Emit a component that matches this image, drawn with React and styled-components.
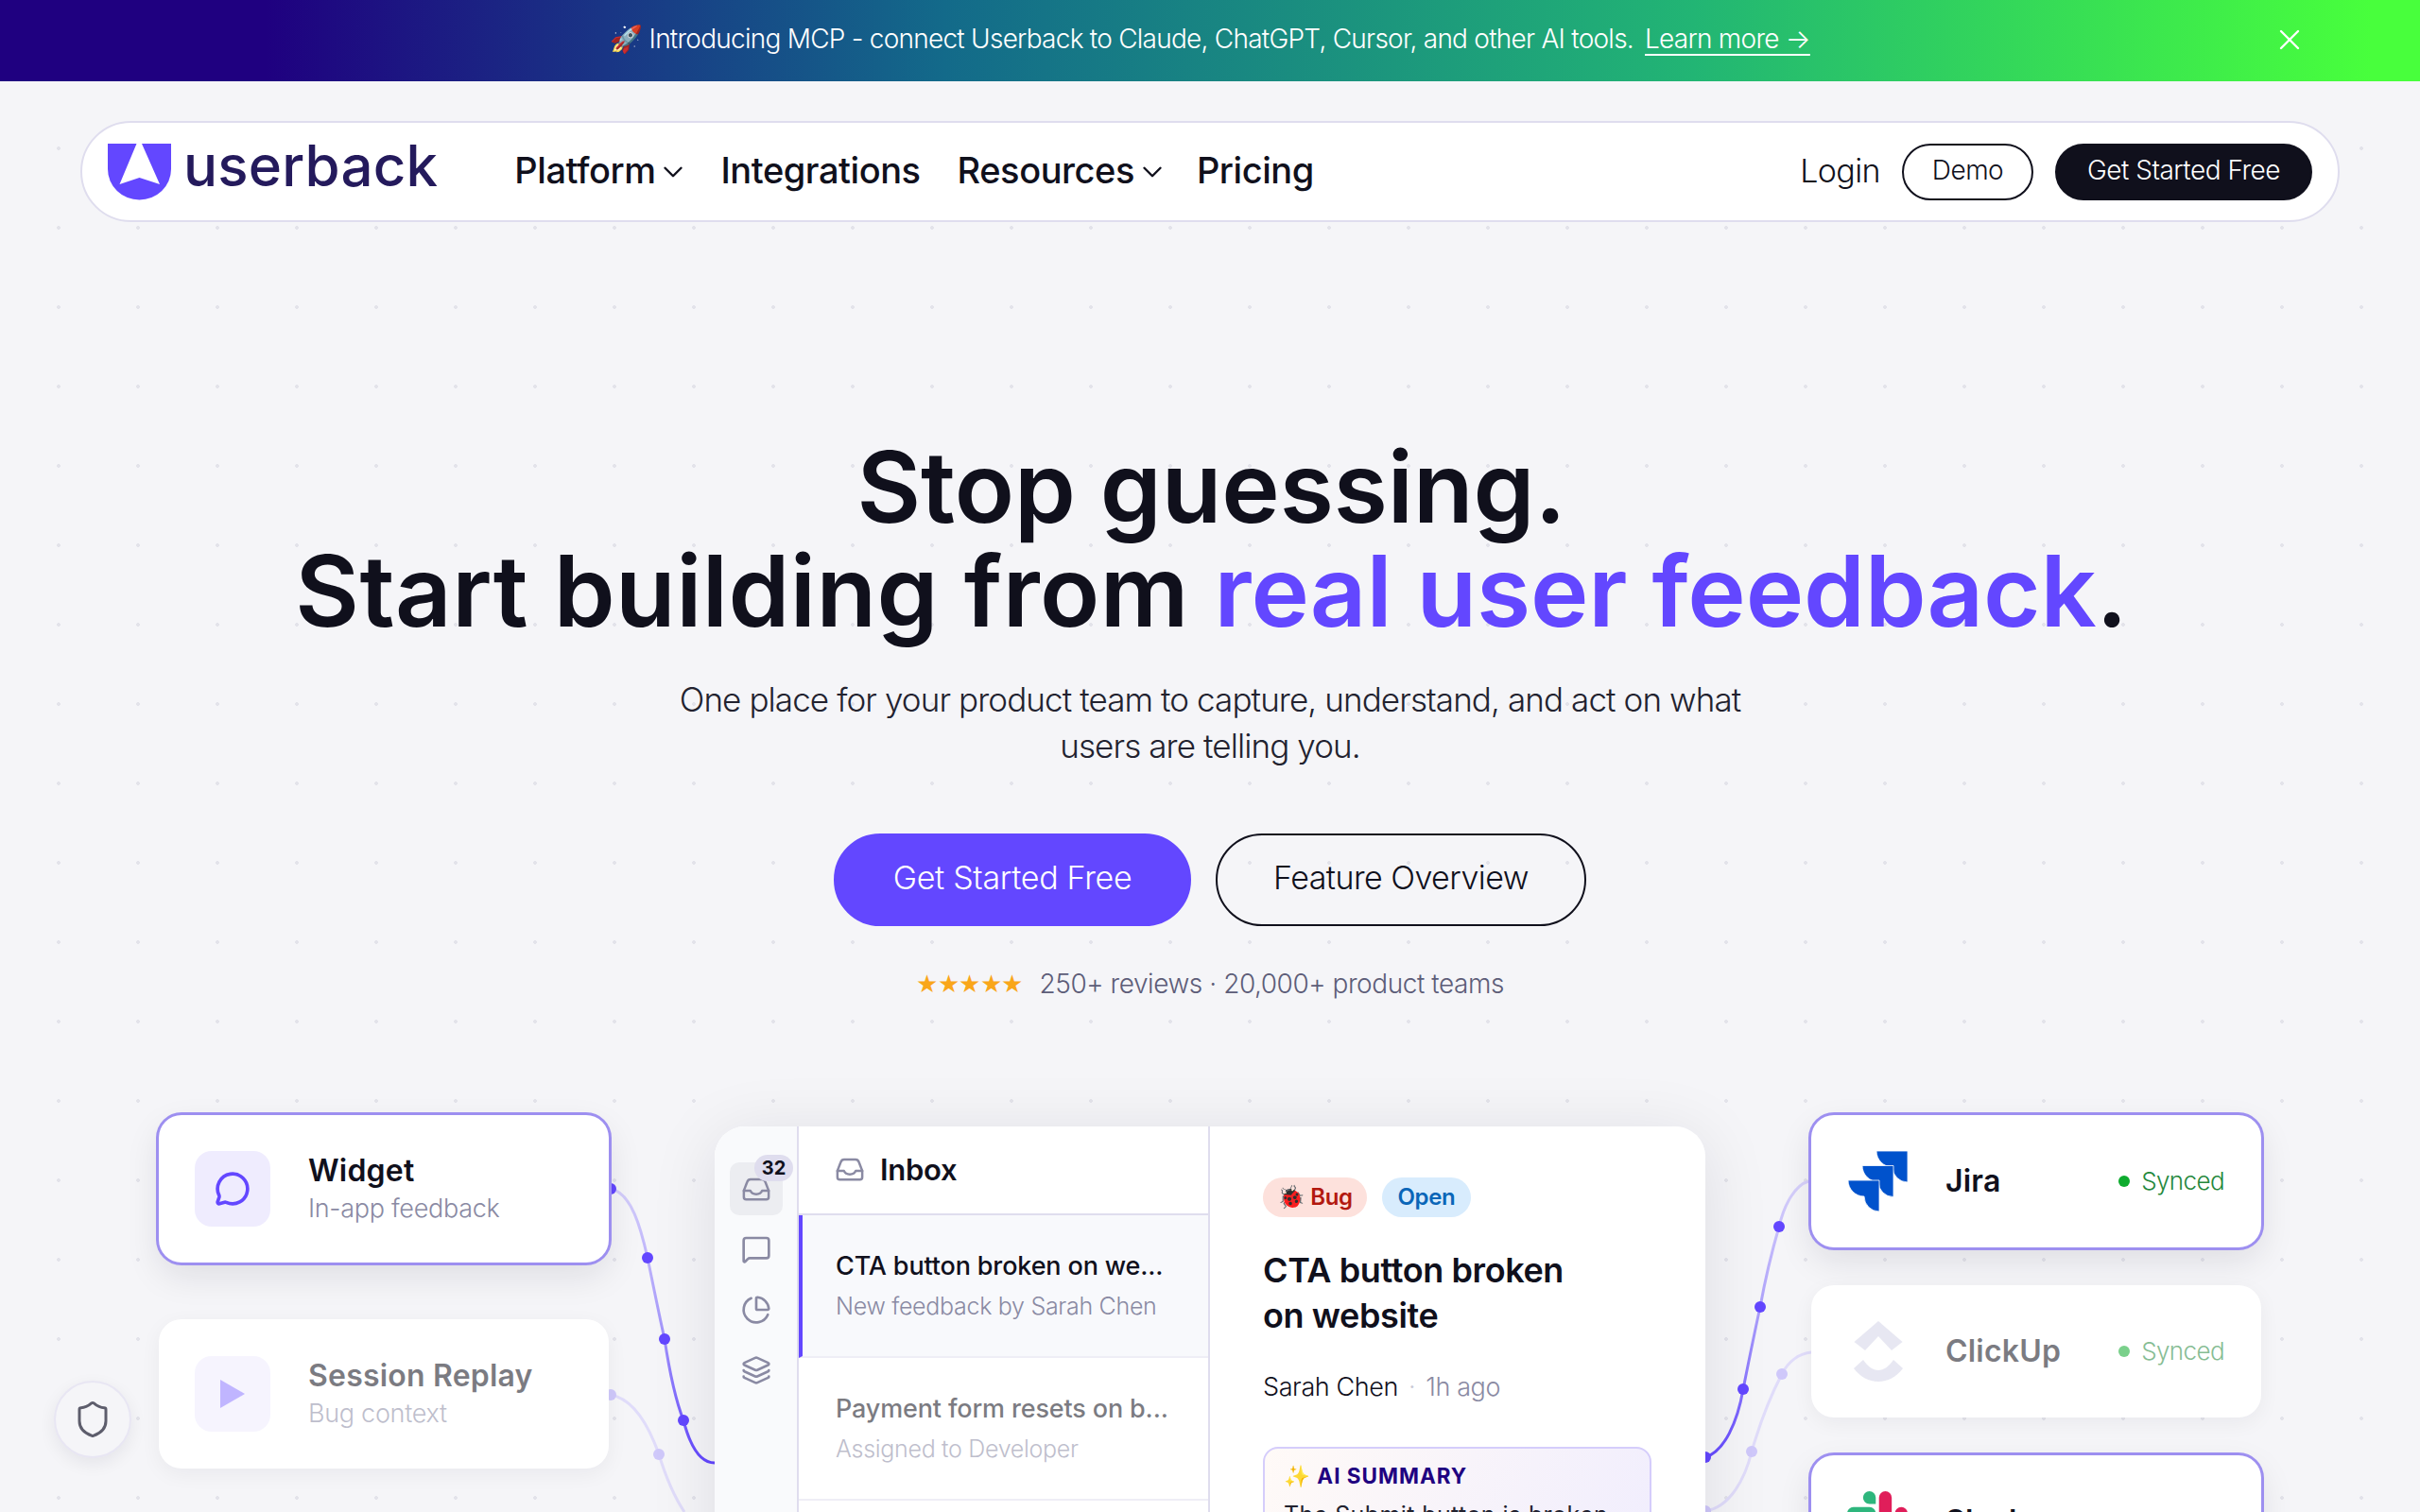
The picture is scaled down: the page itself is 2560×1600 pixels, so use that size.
import React from 'react';
import styled, { createGlobalStyle } from 'styled-components';
import { ChevronDown, X, Shield, MessageCircle, MessageSquare, ChartPie, Layers } from 'lucide-react';

const Global = createGlobalStyle`
  html, body { margin: 0; padding: 0; height: 1600px; overflow: hidden; }
  body { font-family: Inter, "Noto Sans", sans-serif; color: #10101c; background: #f5f5f8; }
  * { box-sizing: border-box; }
  a { color: inherit; }
`;

const Page = styled.div`
  height: 1600px;
  overflow: hidden;
  background-color: #f5f5f8;
  background-image: radial-gradient(circle at center, #e3e3ea 0, #e3e3ea 1.6px, transparent 2.2px);
  background-size: 84px 84px;
  background-position: 20px 31px;
`;

const Banner = styled.div`
  position: relative;
  height: 86px;
  padding-bottom: 5px;
  display: flex;
  align-items: center;
  justify-content: center;
  gap: 12px;
  color: #fff;
  font-size: 28px;
  font-weight: 350;
  letter-spacing: -0.75px;
  background: linear-gradient(90deg, #1f0080 11%, #136a8a 39%, #22b574 70%, #48ff3c 98%);
`;
const BannerLink = styled.a`
  text-decoration: underline;
  text-underline-offset: 6px;
  text-decoration-thickness: 2px;
`;
const BannerClose = styled.button`
  position: absolute;
  right: 120px;
  top: 24px;
  width: 36px;
  height: 36px;
  padding: 0;
  border: 0;
  background: none;
  color: #fff;
  display: flex;
`;

const NavWrap = styled.div`
  padding: 42px 85px 0;
`;
const Nav = styled.nav`
  height: 107px;
  display: flex;
  align-items: center;
  padding: 0 27px;
  background: #fff;
  border: 2px solid #dfddee;
  border-radius: 54px;
`;
const Logo = styled.div`
  display: flex;
  align-items: center;
  gap: 13px;
  margin-right: 81px;
`;
const LogoWord = styled.span`
  font-family: Inter, sans-serif;
  font-weight: 500;
  font-size: 60px;
  line-height: 60px;
  padding-bottom: 13px;
  letter-spacing: 0.2px;
  color: #241a5c;
`;
const NavLinks = styled.div`
  display: flex;
  align-items: center;
  gap: 39px;
`;
const NavLink = styled.a`
  display: flex;
  align-items: center;
  gap: 2px;
  padding-bottom: 3px;
  font-size: 38px;
  font-weight: 500;
  letter-spacing: -0.45px;
  color: #10101c;
  svg { margin: 3px -6px 0 0; }
  &:last-child { margin-left: -3px; }
`;
const NavRight = styled.div`
  margin-left: auto;
  display: flex;
  align-items: center;
  gap: 23px;
`;
const Login = styled.a`
  padding-bottom: 3px;
  font-size: 34px;
  font-weight: 350;
  letter-spacing: -0.6px;
`;
const SmallBtn = styled.button`
  height: 60px;
  padding: 0 0 3px;
  width: ${p => p.$w}px;
  border-radius: 30px;
  font: 350 28px Inter, sans-serif;
  letter-spacing: -0.5px;
  border: 2px solid #10101c;
  color: ${p => (p.$dark ? '#fff' : '#10101c')};
  background: ${p => (p.$dark ? '#10101c' : '#fff')};
`;

const Hero = styled.section`
  padding-top: 225px;
  text-align: center;
`;
const Title = styled.h1`
  margin: 0;
  padding-left: 3px;
  font-size: 104px;
  line-height: 110px;
  font-weight: 600;
  letter-spacing: -0.1px;
  color: #10101c;
`;
const Lead = styled.span`
  letter-spacing: 0.45px;
`;
const Accent = styled.span`
  letter-spacing: -0.15px;
  color: #6347ff;
`;
const Sub = styled.p`
  margin: 36px auto 0;
  width: 1200px;
  font-size: 35px;
  font-weight: 350;
  line-height: 49px;
  letter-spacing: -0.9px;
  color: #22222f;
`;
const Cta = styled.div`
  display: flex;
  justify-content: center;
  gap: 26px;
  margin-top: 68px;
`;
const BigBtn = styled.button`
  height: 98px;
  width: ${p => p.$w}px;
  padding: 0 0 5px;
  border-radius: 49px;
  font: 350 34px Inter, sans-serif;
  letter-spacing: ${p => (p.$primary ? '-0.3px' : '-0.55px')};
  border: 2px solid ${p => (p.$primary ? '#6347ff' : '#10101c')};
  background: ${p => (p.$primary ? '#6347ff' : 'transparent')};
  color: ${p => (p.$primary ? '#fff' : '#10101c')};
`;
const Rating = styled.div`
  margin-top: 41px;
  height: 40px;
  display: flex;
  align-items: center;
  justify-content: center;
  gap: 18px;
  font-size: 28px;
  font-weight: 350;
  letter-spacing: -0.45px;
  color: #5d5d78;
`;
const Stars = styled.span`
  font-family: "DejaVu Sans", sans-serif;
  font-size: 26px;
  letter-spacing: -0.5px;
  color: #f9a61a;
`;

const Diagram = styled.section`
  position: relative;
  margin-top: 99px;
  padding: 20px 168px 0;
  height: 440px;
  display: flex;
  justify-content: space-between;
  align-items: flex-start;
`;
const Wires = styled.svg`
  position: absolute;
  left: 0;
  top: 0;
  width: 2560px;
  height: 440px;
`;
const Column = styled.div`
  position: relative;
  width: 476px;
  display: flex;
  flex-direction: column;
  gap: ${p => p.$gap}px;
`;
const Card = styled.div`
  height: ${p => p.$h}px;
  flex: none;
  display: flex;
  align-items: center;
  padding: 0 38px;
  gap: 40px;
  background: #fff;
  border-radius: 24px;
  box-shadow: ${p => (p.$on
    ? '0 0 0 3px #9d8ff0, 0 14px 36px rgba(20,20,40,.10)'
    : '0 6px 22px rgba(20,20,40,.05)')};
`;
const CardBody = styled.div`
  flex: 1;
  display: flex;
  align-items: center;
  gap: ${p => p.$gap}px;
  opacity: ${p => (p.$on ? 1 : 0.55)};
`;
const Tile = styled.div`
  width: 80px;
  height: 80px;
  flex: none;
  display: flex;
  align-items: center;
  justify-content: center;
  border-radius: 18px;
  background: #efecfe;
  color: #6347ff;
`;
const CardTitle = styled.div`
  font-size: 32px;
  line-height: 40px;
  font-weight: 600;
  letter-spacing: 0.2px;
`;
const CardSub = styled.div`
  font-size: 27px;
  font-weight: 350;
  line-height: 36px;
  letter-spacing: -0.3px;
  color: #8a8aa3;
  margin-top: 2px;
`;
const Status = styled.div`
  margin: 0 1px 2px auto;
  display: flex;
  align-items: center;
  gap: 12px;
  font-size: 26px;
  font-weight: 350;
  letter-spacing: -0.6px;
  color: #24883c;
`;
const StatusDot = styled.i`
  width: 12px;
  height: 12px;
  margin-top: 2px;
  border-radius: 50%;
  background: #0eab2e;
`;

const AppFrame = styled.div`
  position: relative;
  width: 1048px;
  height: 500px;
  margin-top: 12px;
  flex: none;
  display: flex;
  background: #fff;
  border-radius: 32px;
  overflow: hidden;
`;
const AppShadow = styled.div`
  position: relative;
  height: 520px;
  flex: none;
  &::before {
    content: '';
    position: absolute;
    left: 0; right: 0; top: 12px; bottom: 0;
    border-radius: 32px;
    box-shadow: 0 10px 70px rgba(20,20,40,.10);
  }
`;
const Side = styled.div`
  width: 89px;
  flex: none;
  padding: 38px 0 0 16px;
  background: #f9fafc;
  border-right: 2px solid #dfddee;
  display: flex;
  flex-direction: column;
  gap: 8px;
`;
const SideBtn = styled.div`
  position: relative;
  width: 56px;
  height: 56px;
  display: flex;
  align-items: center;
  justify-content: center;
  border-radius: 10px;
  color: #8a8aa3;
  background: ${p => (p.$on ? '#ecedf1' : 'transparent')};
`;
const Badge = styled.span`
  position: absolute;
  left: 26px;
  top: -8px;
  width: 41px;
  height: 28px;
  border-radius: 14px;
  background: #dfddee;
  color: #10101c;
  font-size: 20px;
  line-height: 28px;
  font-weight: 700;
  text-align: center;
`;
const List = styled.div`
  width: 435px;
  flex: none;
  border-right: 2px solid #dfddee;
`;
const ListHead = styled.div`
  height: 94px;
  display: flex;
  align-items: center;
  gap: 17px;
  padding: 0 0 2px 39px;
  border-bottom: 2px solid #dfddee;
  font-size: 31px;
  font-weight: 600;
  letter-spacing: -0.3px;
  color: #8a8aa3;
`;
const ListHeadText = styled.span`
  color: #10101c;
`;
const Item = styled.div`
  height: 151px;
  padding: ${p => (p.$on ? '32px 20px 0 35px' : '32px 20px 0 39px')};
  border-left: ${p => (p.$on ? '4px solid #6347ff' : '0')};
  background: ${p => (p.$on ? '#f8f9fc' : '#fff')};
  border-bottom: 2px solid #efeef6;
`;
const ItemInner = styled.div`
  opacity: ${p => (p.$on ? 1 : 0.55)};
`;
const ItemTitle = styled.div`
  font-size: 27px;
  line-height: 44px;
  font-weight: 500;
  letter-spacing: -0.15px;
  white-space: nowrap;
`;
const ItemSub = styled.div`
  font-size: 25px;
  font-weight: 350;
  line-height: 40px;
  letter-spacing: -0.3px;
  color: #8a8aa3;
`;
const Detail = styled.div`
  flex: 1;
  padding: 54px 56px 0;
`;
const Pills = styled.div`
  display: flex;
  gap: 16px;
`;
const Pill = styled.span`
  height: 42px;
  padding: 0 ${p => p.$pad}px 2px;
  display: flex;
  align-items: center;
  gap: 4px;
  border-radius: 21px;
  font-size: 24px;
  font-weight: 600;
  letter-spacing: -0.4px;
  color: ${p => p.$fg};
  background: ${p => p.$bg};
`;
const DetailTitle = styled.h2`
  margin: 33px 0 0;
  font-size: 36px;
  line-height: 47.5px;
  font-weight: 600;
  letter-spacing: -0.4px;
`;
const Meta = styled.div`
  margin-top: 32px;
  display: flex;
  align-items: center;
  gap: 11px;
  font-size: 27px;
  font-weight: 350;
  line-height: 40px;
  letter-spacing: -0.4px;
  color: #10101c;
`;
const MetaDot = styled.span`
  color: #c8c8d4;
`;
const MetaMuted = styled.span`
  color: #8a8aa3;
`;
const Summary = styled.div`
  margin-top: 43px;
  width: 411px;
  height: 200px;
  padding: 14px 20px;
  border: 2px solid #d5cdfb;
  border-radius: 16px;
  background: linear-gradient(120deg, #fffaf7 0%, #efecfe 100%);
`;
const SummaryHead = styled.div`
  font-size: 22.5px;
  line-height: 30px;
  font-weight: 700;
  letter-spacing: 1px;
  color: #1f0080;
`;
const SummaryText = styled.div`
  margin-top: 8px;
  font-size: 25px;
  line-height: 36px;
  letter-spacing: 0.4px;
  color: #22222f;
  white-space: nowrap;
`;

const ShieldBtn = styled.button`
  position: fixed;
  left: 57px;
  top: 1461px;
  width: 82px;
  height: 82px;
  padding: 0;
  display: flex;
  align-items: center;
  justify-content: center;
  border-radius: 50%;
  border: 2px solid #e8e6f3;
  background: #f5f5f8;
  color: #5d5d6c;
  box-shadow: 0 6px 18px rgba(20,20,40,.07);
`;

const UserbackMark = () => (
  <svg width="67" height="60" viewBox="0 0 67 60">
    <path d="M0 0H67V27A33.5 32.5 0 0 1 0 27Z" fill="#6347ff" />
    <path d="M30.5 0H36L55 43L33.5 36L12.5 43Z" fill="#fff" />
  </svg>
);
const InboxIcon = () => (
  <svg width="30" height="30" viewBox="0 0 24 24" fill="none" stroke="currentColor" strokeWidth="2" strokeLinejoin="round" strokeLinecap="round">
    <path d="M1.5 13.5V19a2 2 0 0 0 2 2h17a2 2 0 0 0 2-2v-5.5L19.6 6a3 3 0 0 0-2.8-2H7.2a3 3 0 0 0-2.8 2z" />
    <path d="M1.5 13.5H7c.8 2 2.6 3 5 3s4.2-1 5-3h5.5" />
  </svg>
);
const JiraPiece = "M0 0H33V33A16 16 0 0 1 17 17A17 17 0 0 1 0 0Z";
const JiraLogo = () => (
  <svg width="64" height="64" viewBox="0 0 64 64" fill="#0052cc" stroke="#fff" strokeWidth="0.8">
    <path d={JiraPiece} transform="translate(31 0)" />
    <path d={JiraPiece} transform="translate(16 15.5)" />
    <path d={JiraPiece} transform="translate(1 31)" />
  </svg>
);
const ClickUpLogo = () => (
  <svg width="64" height="64" viewBox="0 0 64 64" fill="#d5d5e8">
    <path d="M33 0L58.5 22L47 31L33 16L19 31L7.5 22Z" />
    <path d="M7 50L17 41C22 48 27 52 33 52C39 52 44 48 49 41L59 50C52 59 43 64 33 64C23 64 14 59 7 50Z" />
  </svg>
);
const SlackLogo = () => (
  <svg width="64" height="64" viewBox="0 0 24 24">
    <path fill="#36c5f0" d="M5.042 15.165a2.528 2.528 0 0 1-2.52 2.523A2.528 2.528 0 0 1 0 15.165a2.527 2.527 0 0 1 2.522-2.52h2.52v2.52zM6.313 15.165a2.527 2.527 0 0 1 2.521-2.52 2.527 2.527 0 0 1 2.521 2.52v6.313A2.528 2.528 0 0 1 8.834 24a2.528 2.528 0 0 1-2.521-2.522v-6.313z" />
    <path fill="#2eb67d" d="M8.834 5.042a2.528 2.528 0 0 1-2.521-2.52A2.528 2.528 0 0 1 8.834 0a2.528 2.528 0 0 1 2.521 2.522v2.52H8.834zM8.834 6.313a2.528 2.528 0 0 1 2.521 2.521 2.528 2.528 0 0 1-2.521 2.521H2.522A2.528 2.528 0 0 1 0 8.834a2.528 2.528 0 0 1 2.522-2.521h6.312z" />
    <path fill="#e01e5a" d="M18.956 8.834a2.528 2.528 0 0 1 2.522-2.521A2.528 2.528 0 0 1 24 8.834a2.528 2.528 0 0 1-2.522 2.521h-2.522V8.834zM17.688 8.834a2.528 2.528 0 0 1-2.523 2.521 2.527 2.527 0 0 1-2.52-2.521V2.522A2.527 2.527 0 0 1 15.165 0a2.528 2.528 0 0 1 2.523 2.522v6.312z" />
    <path fill="#ecb22e" d="M15.165 18.956a2.528 2.528 0 0 1 2.523 2.522A2.528 2.528 0 0 1 15.165 24a2.527 2.527 0 0 1-2.52-2.522v-2.522h2.52zM15.165 17.688a2.527 2.527 0 0 1-2.52-2.523 2.526 2.526 0 0 1 2.52-2.52h6.313A2.527 2.527 0 0 1 24 15.165a2.528 2.528 0 0 1-2.522 2.523h-6.313z" />
  </svg>
);

const WireLayer = () => (
  <Wires viewBox="0 1160 2560 440" fill="none">
    <defs>
      <linearGradient id="wire" gradientUnits="userSpaceOnUse" x1="0" y1="1250" x2="0" y2="1548">
        <stop offset="0" stopColor="#d8d2fb" />
        <stop offset="0.5" stopColor="#a79afa" />
        <stop offset="1" stopColor="#6347ff" />
      </linearGradient>
    </defs>
    <path d="M646 1258C668 1262 678 1300 685 1331C692 1365 697 1390 703 1417C708 1450 714 1480 723 1503C730 1530 740 1548 756 1548" stroke="url(#wire)" strokeWidth="3" />
    <path d="M1804 1542C1824 1536 1838 1505 1844 1470C1850 1440 1856 1410 1862 1383C1868 1350 1875 1322 1882 1298C1888 1272 1900 1254 1913 1250" stroke="url(#wire)" strokeWidth="3" />
    <path d="M646 1476C668 1480 685 1505 697 1539C705 1565 714 1585 724 1600" stroke="#e0dcfa" strokeWidth="3" />
    <path d="M1804 1599C1830 1595 1846 1565 1853 1536C1862 1505 1874 1475 1885 1454C1892 1440 1904 1432 1916 1431" stroke="#e0dcfa" strokeWidth="3" />
    <g fill="#6347ff">
      <circle cx="646" cy="1258" r="6" />
      <circle cx="685" cy="1331" r="6" />
      <circle cx="703" cy="1417" r="6" />
      <circle cx="723" cy="1503" r="6" />
      <circle cx="1804" cy="1542" r="6" />
      <circle cx="1844" cy="1470" r="6" />
      <circle cx="1862" cy="1383" r="6" />
      <circle cx="1882" cy="1298" r="6" />
    </g>
    <g fill="#cfc8fa">
      <circle cx="646" cy="1476" r="6" />
      <circle cx="697" cy="1539" r="6" />
      <circle cx="1804" cy="1599" r="6" />
      <circle cx="1853" cy="1536" r="6" />
      <circle cx="1885" cy="1454" r="6" />
    </g>
  </Wires>
);

export default function App() {
  return (
    <Page>
      <Global />
      <Banner>
        <span>🚀 Introducing MCP - connect Userback to Claude, ChatGPT, Cursor, and other AI tools.</span>
        <BannerLink>Learn more →</BannerLink>
        <BannerClose><X size={36} strokeWidth={1.6} /></BannerClose>
      </Banner>
      <NavWrap>
        <Nav>
          <Logo>
            <UserbackMark />
            <LogoWord>userback</LogoWord>
          </Logo>
          <NavLinks>
            <NavLink>Platform <ChevronDown size={34} strokeWidth={1.7} /></NavLink>
            <NavLink>Integrations</NavLink>
            <NavLink>Resources <ChevronDown size={34} strokeWidth={1.7} /></NavLink>
            <NavLink>Pricing</NavLink>
          </NavLinks>
          <NavRight>
            <Login>Login</Login>
            <SmallBtn $w={139}>Demo</SmallBtn>
            <SmallBtn $w={272} $dark>Get Started Free</SmallBtn>
          </NavRight>
        </Nav>
      </NavWrap>
      <Hero>
        <Title>Stop guessing.<br /><Lead>Start building from </Lead><Accent>real user feedback</Accent>.</Title>
        <Sub>One place for your product team to capture, understand, and act on what<br />users are telling you.</Sub>
        <Cta>
          <BigBtn $w={378} $primary>Get Started Free</BigBtn>
          <BigBtn $w={392}>Feature Overview</BigBtn>
        </Cta>
        <Rating>
          <Stars>★★★★★</Stars>
          <span>250+ reviews · 20,000+ product teams</span>
        </Rating>
      </Hero>
      <Diagram>
        <WireLayer />
        <Column $gap={60}>
          <Card $h={156} $on>
            <CardBody $on $gap={40}>
              <Tile><MessageCircle size={38} strokeWidth={2.3} /></Tile>
              <div>
                <CardTitle>Widget</CardTitle>
                <CardSub>In-app feedback</CardSub>
              </div>
            </CardBody>
          </Card>
          <Card $h={158}>
            <CardBody $gap={40}>
              <Tile>
                <svg width="26" height="30" viewBox="0 0 26 30"><path d="M0 0L26 15L0 30Z" fill="#8e7aff" /></svg>
              </Tile>
              <div>
                <CardTitle>Session Replay</CardTitle>
                <CardSub>Bug context</CardSub>
              </div>
            </CardBody>
          </Card>
        </Column>
        <AppShadow>
          <AppFrame>
            <Side>
              <SideBtn $on><InboxIcon /><Badge>32</Badge></SideBtn>
              <SideBtn><MessageSquare size={32} strokeWidth={2} /></SideBtn>
              <SideBtn><ChartPie size={32} strokeWidth={2} /></SideBtn>
              <SideBtn><Layers size={32} strokeWidth={2} /></SideBtn>
            </Side>
            <List>
              <ListHead><InboxIcon /><ListHeadText>Inbox</ListHeadText></ListHead>
              <Item $on>
                <ItemInner $on>
                  <ItemTitle>CTA button broken on we...</ItemTitle>
                  <ItemSub>New feedback by Sarah Chen</ItemSub>
                </ItemInner>
              </Item>
              <Item>
                <ItemInner>
                  <ItemTitle>Payment form resets on b...</ItemTitle>
                  <ItemSub>Assigned to Developer</ItemSub>
                </ItemInner>
              </Item>
            </List>
            <Detail>
              <Pills>
                <Pill $pad={15} $bg="#fde1dc" $fg="#b3190f">🐞 Bug</Pill>
                <Pill $pad={17} $bg="#d8ecfd" $fg="#0a66b8">Open</Pill>
              </Pills>
              <DetailTitle>CTA button broken<br />on website</DetailTitle>
              <Meta>
                <span>Sarah Chen</span>
                <MetaDot>·</MetaDot>
                <MetaMuted>1h ago</MetaMuted>
              </Meta>
              <Summary>
                <SummaryHead>✨ AI SUMMARY</SummaryHead>
                <SummaryText>The Submit button is broken</SummaryText>
              </Summary>
            </Detail>
          </AppFrame>
        </AppShadow>
        <Column $gap={40}>
          <Card $h={140} $on>
            <CardBody $on $gap={40}>
              <JiraLogo />
              <CardTitle>Jira</CardTitle>
              <Status><StatusDot />Synced</Status>
            </CardBody>
          </Card>
          <Card $h={140}>
            <CardBody $gap={40}>
              <ClickUpLogo />
              <CardTitle>ClickUp</CardTitle>
              <Status><StatusDot />Synced</Status>
            </CardBody>
          </Card>
          <Card $h={140} $on>
            <CardBody $on $gap={40}>
              <SlackLogo />
              <CardTitle>Slack</CardTitle>
              <Status><StatusDot />Synced</Status>
            </CardBody>
          </Card>
        </Column>
      </Diagram>
      <ShieldBtn><Shield size={42} strokeWidth={1.7} /></ShieldBtn>
    </Page>
  );
}
